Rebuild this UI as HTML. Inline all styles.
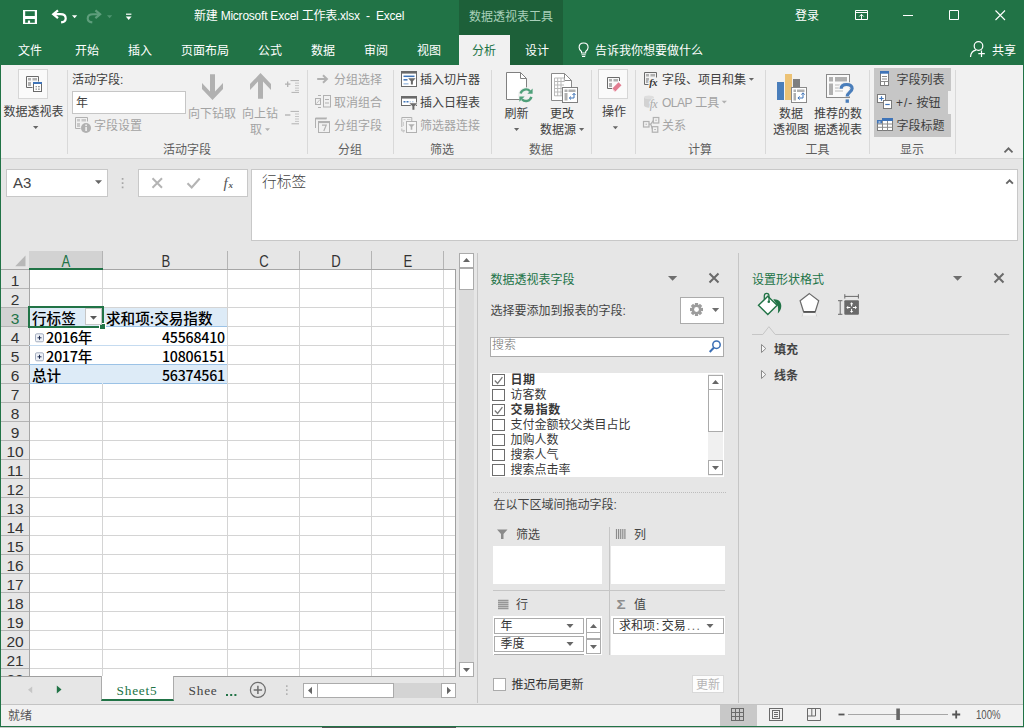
<!DOCTYPE html>
<html lang="zh-CN">
<head>
<meta charset="utf-8">
<title>新建 Microsoft Excel 工作表.xlsx - Excel</title>
<style>
*{box-sizing:border-box;margin:0;padding:0}
html,body{width:1024px;height:728px;overflow:hidden;background:#e6e6e6}
body{position:relative;font-family:"Liberation Sans","Noto Sans CJK SC",sans-serif;font-size:12px;color:#404040}
.a{position:absolute;white-space:nowrap}
.t{position:absolute;white-space:nowrap;line-height:16px;height:16px}
.w{color:#fff}
.g{color:#a3a3a3}
.c{text-align:center}
.sim{font-family:"Liberation Sans","Noto Sans CJK SC",sans-serif;font-weight:400}
svg{position:absolute;overflow:visible}
/* header */
#hdr{left:0;top:0;width:1024px;height:65px;background:#217346}
#ctx{left:459px;top:0;width:104px;height:65px;background:#1d6039}
#tabact{left:459px;top:35px;width:51px;height:30px;background:#f1f1f1}
#rib{left:0;top:65px;width:1024px;height:93px;background:#f1f1f1}
#ribline{left:0;top:158px;width:1024px;height:1px;background:#d5d5d5}
.sep{position:absolute;top:70px;width:1px;height:84px;background:#d9d9d9}
.gl2{color:#5e5e5e}
/* grid */
#grid{left:1px;top:251px;width:455px;height:425px;background:#fff;overflow:hidden}
.ch{position:absolute;top:0;height:18px;line-height:19px;text-align:center;font-size:16px;transform:scaleX(.82);color:#333;font-family:"Liberation Sans",sans-serif}
.rh{position:absolute;left:0;width:28px;height:19px;line-height:21px;text-align:center;font-size:15.500px;color:#333;font-family:"Liberation Sans",sans-serif}
.cell{position:absolute;height:18px;line-height:18px;font-size:14.6px;color:#000;font-family:"Noto Sans CJK SC","Liberation Sans",sans-serif}
.num{font-size:14.2px;letter-spacing:-0.2px}
/* panes */
.pane-t{color:#217346;font-size:12px}
.fld{position:absolute;left:510.500px;height:15px;line-height:15px;font-size:12px;color:#383838;white-space:nowrap}
.cb{position:absolute;left:492px;width:13px;height:12px;border:1px solid #6d6d6d;background:#fff}
</style>
</head>
<body>
<!-- HEADER -->
<div class="a" id="hdr"></div>
<div class="a" id="ctx"></div>
<div class="a" id="tabact"></div>
<div class="a" id="rib"></div>
<div class="a" id="ribline"></div>

<!--TITLEBAR-->
<svg style="left:0;top:0" width="1024" height="34" viewBox="0 0 1024 34" fill="none">
 <!-- save -->
 <path d="M23 10h14v14h-14z M25.200 11.300v4.700h9.600v-4.700z M25.200 19v3.700h2.700v-2.100h2.200v2.100h4.700v-3.700z" fill="#fff" fill-rule="evenodd"/>
 <!-- undo -->
 <path d="M58 10.300l-4.700 3.900 4.700 3.900" stroke="#fff" stroke-width="2.300"/>
 <path d="M54 14.200h6.400c3.200 0 5.300 1.700 5.300 4.200 0 2.100-1.600 3.600-4.600 4" stroke="#fff" stroke-width="2.200"/>
 <path d="M72 15.300h5.200l-2.600 3z" fill="#fff"/>
 <!-- redo -->
 <path d="M95.400 10.300l4.700 3.900-4.700 3.900" stroke="#5e9e7c" stroke-width="2.200"/>
 <path d="M99.400 14.200h-6.400c-3.200 0-5.300 1.700-5.300 4.200 0 2.100 1.600 3.600 4.600 4" stroke="#5e9e7c" stroke-width="2.100"/>
 <path d="M107 15.300h5.200l-2.600 3z" fill="#4f9470"/>
 <!-- customize -->
 <path d="M126 14.200h5.400" stroke="#fff" stroke-width="1.200"/>
 <path d="M125.800 16.600h5.800l-2.900 3.400z" fill="#fff"/>
 <!-- ribbon display -->
 <path d="M855.500 10.500h12v9h-12z" stroke="#fff" stroke-width="1"/>
 <path d="M855.500 12.500h12" stroke="#fff" stroke-width="1"/>
 <path d="M861.500 14.500v4.500M859.300 16.500l2.200-2.200 2.200 2.200" stroke="#fff" stroke-width="1"/>
 <!-- min -->
 <path d="M903 15.500h10" stroke="#fff" stroke-width="1"/>
 <!-- max -->
 <path d="M949.500 10.500h9v9h-9z" stroke="#fff" stroke-width="1"/>
 <!-- close -->
 <path d="M995.500 10.500l9.500 9.500M1005 10.500l-9.500 9.500" stroke="#fff" stroke-width="1.100"/>
</svg>
<div class="t w" id="ttl" style="left:194px;top:8px;font-size:12px;letter-spacing:-0.23px">新建 Microsoft Excel 工作表.xlsx&nbsp; -&nbsp; Excel</div>
<div class="t" style="left:469px;top:8.500px;color:#a9d0ba">数据透视表工具</div>
<div class="t w" style="left:795px;top:8px">登录</div>
<!--TABS-->
<div class="t w" style="left:18px;top:43px">文件</div>
<div class="t w" style="left:75px;top:43px">开始</div>
<div class="t w" style="left:128px;top:43px">插入</div>
<div class="t w" style="left:181px;top:43px">页面布局</div>
<div class="t w" style="left:258px;top:43px">公式</div>
<div class="t w" style="left:311px;top:43px">数据</div>
<div class="t w" style="left:364px;top:43px">审阅</div>
<div class="t w" style="left:417px;top:43px">视图</div>
<div class="t" style="left:472px;top:43px;color:#217346">分析</div>
<div class="t w" style="left:525px;top:43px">设计</div>
<div class="t w" style="left:595px;top:43px">告诉我你想要做什么</div>
<div class="t w" style="left:992px;top:43px">共享</div>
<svg style="left:0;top:34px" width="1024" height="31" viewBox="0 34 1024 31" fill="none">
 <!-- bulb -->
 <path d="M581.500 53v-1.500c-1.600-1.300-2.400-2.400-2.400-4.100 0-2.600 1.900-4.400 4.500-4.400s4.500 1.800 4.500 4.400c0 1.700-.8 2.800-2.400 4.100v1.500z" stroke="#fff" stroke-width="1.100"/>
 <path d="M581.500 54.800h4.200M582 56.500h3.200" stroke="#fff" stroke-width="1"/>
 <!-- person -->
 <circle cx="978.500" cy="46" r="4.300" stroke="#fff" stroke-width="1.200"/>
 <path d="M970.500 57c.3-3.800 2.600-6.300 5.400-6.800" stroke="#fff" stroke-width="1.200"/>
 <path d="M981.500 50.500v6.500M978.300 53.700h6.500" stroke="#fff" stroke-width="1.200"/>
</svg>
<!--RIBBON-->
<div class="sep" style="left:67px"></div>
<div class="sep" style="left:307px"></div>
<div class="sep" style="left:393px"></div>
<div class="sep" style="left:491px"></div>
<div class="sep" style="left:591px"></div>
<div class="sep" style="left:635px"></div>
<div class="sep" style="left:765px"></div>
<div class="sep" style="left:869px"></div>
<div class="sep" style="left:955px"></div>
<div class="a" style="left:18px;top:69px;width:30px;height:30px;background:#fafafa;border:1px solid #d6d6d6"></div>
<div class="t c " style="left:-16.5px;width:100px;top:104px;">数据透视表</div>
<div class="t " style="left:72px;top:72px;">活动字段:</div>
<div class="a" style="left:72px;top:91px;width:114px;height:23px;background:#fff;border:1px solid #c6c6c6"></div>
<div class="t " style="left:76px;top:94.5px;">年</div>
<div class="t g" style="left:94px;top:117.5px;">字段设置</div>
<div class="t c g" style="left:162.0px;width:100px;top:105.5px;">向下钻取</div>
<div class="t c g" style="left:210.0px;width:100px;top:105.5px;">向上钻</div>
<div class="t g" style="left:250px;top:121.5px;">取</div>
<div class="t c gl2" style="left:137.0px;width:100px;top:142px;">活动字段</div>
<div class="t g" style="left:334px;top:71.5px;">分组选择</div>
<div class="t g" style="left:334px;top:95px;">取消组合</div>
<div class="t g" style="left:334px;top:117.5px;">分组字段</div>
<div class="t c gl2" style="left:300.0px;width:100px;top:142px;">分组</div>
<div class="t " style="left:420px;top:71.5px;">插入切片器</div>
<div class="t " style="left:420px;top:95px;">插入日程表</div>
<div class="t g" style="left:420px;top:117.5px;">筛选器连接</div>
<div class="t c gl2" style="left:392.0px;width:100px;top:142px;">筛选</div>
<div class="t c " style="left:466.5px;width:100px;top:105.5px;">刷新</div>
<div class="t c " style="left:512.0px;width:100px;top:105.5px;">更改</div>
<div class="t " style="left:540px;top:121.5px;">数据源</div>
<div class="t c gl2" style="left:491.0px;width:100px;top:142px;">数据</div>
<div class="a" style="left:598px;top:69px;width:30px;height:30px;background:#fafafa;border:1px solid #d6d6d6"></div>
<div class="t c " style="left:564.0px;width:100px;top:104px;">操作</div>
<div class="t " style="left:662px;top:71.5px;">字段、项目和集</div>
<div class="t g" style="left:662px;top:94.5px;"><span style="letter-spacing:-0.5px">OLAP</span> 工具</div>
<div class="t g" style="left:662px;top:117.5px;">关系</div>
<div class="t c gl2" style="left:650.0px;width:100px;top:142px;">计算</div>
<div class="t c " style="left:741.0px;width:100px;top:105.5px;">数据</div>
<div class="t c " style="left:741.0px;width:100px;top:121.5px;">透视图</div>
<div class="t c " style="left:788.0px;width:100px;top:105.5px;">推荐的数</div>
<div class="t c " style="left:788.0px;width:100px;top:121.5px;">据透视表</div>
<div class="t c gl2" style="left:767.5px;width:100px;top:142px;">工具</div>
<div class="a" style="left:874px;top:68px;width:77px;height:69px;background:#c6c6c6"></div>
<div class="a" style="left:948px;top:91px;width:3px;height:23px;background:#f1f1f1"></div>
<div class="t " style="left:896.5px;top:72px;">字段列表</div>
<div class="t " style="left:896px;top:95px;"><span style="letter-spacing:0.9px">+/-</span> 按钮</div>
<div class="t " style="left:896.5px;top:117.5px;">字段标题</div>
<div class="t c gl2" style="left:862.0px;width:100px;top:142px;">显示</div>
<svg style="left:0;top:65px" width="1024" height="94" viewBox="0 65 1024 94" fill="none">
<g>
<path d="M26.500 76.500h12v5" stroke="#6a6a6a" stroke-width="1"/><path d="M26.500 76.500v11h6" stroke="#6a6a6a" stroke-width="1"/>
<rect x="28" y="78" width="3" height="2.500" fill="#b0b0b0"/><rect x="32.500" y="78" width="4.500" height="2.500" fill="#b0b0b0"/><rect x="28" y="82" width="3" height="4" fill="#b0b0b0"/>
<rect x="33.500" y="82.500" width="8" height="9" fill="#fff" stroke="#6a6a6a" stroke-width="1"/>
<rect x="33" y="82" width="9" height="2" fill="#3f74b8"/>
<rect x="35.500" y="86" width="1.500" height="1.300" fill="#999"/><rect x="38" y="86" width="1.800" height="1.300" fill="#999"/><rect x="35.500" y="88.500" width="1.500" height="1.300" fill="#999"/><rect x="38" y="88.500" width="1.800" height="1.300" fill="#999"/>
</g>
<path d="M33 126h5.4l-2.7 3z" fill="#666"/>
<g>
<path d="M75.500 128.500v-11h12v4" stroke="#b1b1b1" stroke-width="1"/><path d="M75.500 128.500h5" stroke="#b1b1b1" stroke-width="1"/>
<rect x="77" y="119" width="3" height="2.500" fill="#c9c9c9"/><rect x="81.500" y="119" width="4.500" height="2.500" fill="#c9c9c9"/><rect x="77" y="123" width="3" height="4" fill="#c9c9c9"/>
<circle cx="86" cy="128" r="5" fill="#b1b1b1"/><rect x="85.300" y="127" width="1.600" height="4" fill="#f1f1f1"/><rect x="85.300" y="124.500" width="1.600" height="1.600" fill="#f1f1f1"/>
</g>
<path d="M210 74.300h5v17.200l8-8.500v6l-10.500 11-10.500-11v-6l8 8.500z" fill="#b1b1b1"/>
<path d="M258 98.800h5v-17.200l8 8.500v-6l-10.500-11-10.500 11v6l8-8.500z" fill="#b1b1b1"/>
<path d="M265 128.3h5l-2.5 2.6z" fill="#b1b1b1"/>
<path d="M285 84.200h5.400M287.700 81.400v5.600" stroke="#b1b1b1" stroke-width="1.300"/><path d="M290.500 80.600h8.500M291.500 92.400h7.500" stroke="#b1b1b1" stroke-width="1"/><path d="M295 83.100h4M295 85.600h4M295 88.100h4M295 90.400h4" stroke="#c4c4c4" stroke-width="1"/>
<path d="M285 115h5.400" stroke="#b1b1b1" stroke-width="1.300"/><path d="M290.500 111.400h8.500M291.500 123.800h7.500" stroke="#b1b1b1" stroke-width="1"/><path d="M295 114h4M295 116.500h4M295 119h4M295 121.400h4" stroke="#c4c4c4" stroke-width="1"/>
<path d="M317.200 79h8.600M323 75.300l3.900 3.700-3.900 3.700" stroke="#b1b1b1" stroke-width="2"/>
<rect x="323.500" y="95.500" width="7" height="11.500" stroke="#b1b1b1" stroke-width="1"/><path d="M325 99.500h4M325 103h4" stroke="#b1b1b1" stroke-width="1"/><rect x="315.500" y="98.500" width="5" height="6" stroke="#b1b1b1" stroke-width="1"/><path d="M316.500 103.500l3.500-4" stroke="#b1b1b1" stroke-width=".8"/><path d="M318 95.500h3M318 107.500h3" stroke="#b1b1b1" stroke-width="1"/>
<path d="M315.500 128v-10h11.500" stroke="#b1b1b1" stroke-width="1"/><path d="M315.500 118.700h11" stroke="#b1b1b1" stroke-width="1.400"/><rect x="318.500" y="121.500" width="11" height="11" stroke="#b1b1b1" stroke-width="1"/><path d="M318.500 122.300h11" stroke="#b1b1b1" stroke-width="1.600"/><path d="M322 125.200h4.200l-2.400 5.800" stroke="#b1b1b1" stroke-width="1.200"/>
<rect x="401.500" y="71.500" width="15" height="15" fill="#fff" stroke="#6a6a6a" stroke-width="1"/><rect x="401" y="71" width="16" height="2.600" fill="#6a6a6a"/><path d="M403.500 76.300h11" stroke="#3f74b8" stroke-width="1.500"/><path d="M403.500 79.800h4" stroke="#3f74b8" stroke-width="1.500"/><path d="M403.500 83.800h5" stroke="#a9c4e4" stroke-width="1.500"/><path d="M408.200 78.300h7.400l-2.700 3v3.300h-2v-3.300z" fill="#6a6a6a"/>
<rect x="401.500" y="96.500" width="15" height="9" fill="#fff" stroke="#6a6a6a" stroke-width="1"/><rect x="401" y="96" width="16" height="2.600" fill="#6a6a6a"/><path d="M403.500 101.800h2M406.500 101.800h2" stroke="#3f74b8" stroke-width="1.400"/><path d="M409.500 101.800h1.500M412 101.800h1.500" stroke="#a9c4e4" stroke-width="1.200"/><path d="M408.800 102.500h9v1l-3.200 3.300v3.200h-2.600v-3.200l-3.200-3.300z" fill="#f1f1f1"/><path d="M409.600 103.200h7.600l-2.800 3v3.600h-2v-3.600z" fill="#6a6a6a"/>
<path d="M401.800 127v-9.500h10v3.500" stroke="#b1b1b1" stroke-width="1"/><path d="M403.500 119.500h2M407 119.500h3.500M403.500 122v4" stroke="#cfcfcf" stroke-width="1"/><rect x="406.500" y="121.500" width="10" height="11" fill="#f6f6f6" stroke="#b1b1b1" stroke-width="1"/><path d="M408.300 124.200h6.400l-2.400 2.500v3h-1.600v-3z" fill="#b1b1b1"/><path d="M401.800 128.500v2.500h2.500M403.300 129.800l1.200 1.200-1.200 1.200" stroke="#b1b1b1" stroke-width=".8"/>
<path d="M506.500 72.500h14l6 6v21h-20z" fill="#fff" stroke="#808080" stroke-width="1"/><path d="M520.500 72.500v6h6" stroke="#808080" stroke-width="1"/>
<circle cx="526" cy="95.200" r="8" fill="#f1f1f1"/><path d="M520.600 93.500a5.600 5.600 0 0 1 9.500-2.300" stroke="#4fa07a" stroke-width="2.400"/><path d="M531.400 96.900a5.600 5.600 0 0 1-9.500 2.300" stroke="#4fa07a" stroke-width="2.400"/><path d="M532.600 88.600v5.200h-5.200z" fill="#4fa07a"/><path d="M519.400 101.800v-5.200h5.200z" fill="#4fa07a"/>
<path d="M514 128h5.2l-2.6 2.9z" fill="#666"/>
<path d="M551.500 73.500h13l7 7v20h-20z" fill="#fff" stroke="#8a8a8a" stroke-width="1"/><path d="M564.500 73.500v7h7" stroke="#8a8a8a" stroke-width="1"/><path d="M554.500 78v18M557.700 78v18M561 78v18M554.500 78h9.500M554.500 81.500h9.500M554.500 85h9.500M554.500 88.500h9.500M554.500 92h9.500M554.500 95.800h9.500M564.200 78v4" stroke="#b9b9b9" stroke-width="1"/>
<rect x="562.500" y="87.500" width="15" height="15" fill="#fff" stroke="#808080" stroke-width="1"/><rect x="564.500" y="89.500" width="3" height="2.500" fill="#b0b0b0"/><rect x="568.500" y="89.500" width="7" height="2.500" fill="#b0b0b0"/><rect x="564.500" y="93" width="3" height="7.500" fill="#b0b0b0"/><path d="M569.500 98h4.500v-4.500M571 96.500l-1.700 1.500 1.700 1.500M572.500 95l1.500-1.700 1.500 1.700" stroke="#3f74b8" stroke-width="1"/>
<path d="M579 128h5.2l-2.6 2.9z" fill="#666"/>
<path d="M607.500 88.500v-11h12v3.500" stroke="#6a6a6a" stroke-width="1"/><path d="M607.500 88.500h4.500" stroke="#6a6a6a" stroke-width="1"/><rect x="609" y="79" width="3" height="2.500" fill="#b0b0b0"/><rect x="613.500" y="79" width="4.500" height="2.500" fill="#b0b0b0"/><rect x="609" y="83" width="3" height="4" fill="#b0b0b0"/><path d="M618.500 82.200l3 3-6.200 6.400-3-3z" fill="#e27d91"/><path d="M612.700 89.300l2.300 2.300" stroke="#f6c3cc" stroke-width="1"/>
<path d="M612.8 126.3h5.2l-2.6 2.9z" fill="#666"/>
<path d="M650 84.500h-5.500v-12h12v5" stroke="#6a6a6a" stroke-width="1"/><rect x="646" y="74" width="3" height="2.500" fill="#b0b0b0"/><rect x="650.500" y="74" width="4.500" height="2.500" fill="#b0b0b0"/><rect x="646" y="78" width="3" height="5" fill="#b0b0b0"/><text x="649.300" y="85.500" font-family="Liberation Serif,serif" font-style="italic" font-size="10.500" font-weight="bold" fill="#333" stroke="#f1f1f1" stroke-width="2.500" paint-order="stroke" letter-spacing="-0.5">fx</text>
<path d="M748.8 78h5.2l-2.6 2.8z" fill="#666"/>
<path d="M644 97.500v8c0 1.200 2.200 2.200 4.900 2.200s4.900-1 4.900-2.200v-8" fill="#d2d2d2"/><ellipse cx="648.900" cy="97.300" rx="4.900" ry="1.900" fill="#dedede"/><text x="649.800" y="108.300" font-family="Liberation Serif,serif" font-style="italic" font-size="11.500" fill="#a9a9a9" stroke="#f1f1f1" stroke-width="2" paint-order="stroke" letter-spacing="-0.5">fx</text>
<path d="M721.7 100.8h5.2l-2.6 2.8z" fill="#b1b1b1"/>
<rect x="643.500" y="121.500" width="5.500" height="5.500" stroke="#b1b1b1" stroke-width="1.200"/><rect x="653.300" y="117.500" width="5.500" height="5.500" stroke="#b1b1b1" stroke-width="1.200"/><rect x="652.300" y="126.700" width="5.500" height="5.500" stroke="#b1b1b1" stroke-width="1.200"/><path d="M649 124.200h1.800l2.500-3.500M650.800 124.200l1.700 5" stroke="#b1b1b1" stroke-width="1.200"/><path d="M645.500 124.200h1.500M655.300 120.200h1.500M654.300 129.500h1.500" stroke="#b1b1b1" stroke-width="1"/>
<rect x="777" y="82" width="7" height="18" fill="#4a7ebb"/><rect x="785" y="74" width="7" height="26" fill="#ecc275"/><rect x="793" y="79" width="7" height="9" fill="#7f7f7f"/><rect x="791.500" y="87.500" width="15" height="15" fill="#fff" stroke="#8a8a8a" stroke-width="1"/><rect x="793.500" y="89.500" width="2.500" height="2.500" fill="#b0b0b0"/><rect x="797" y="89.500" width="7.500" height="2.500" fill="#b0b0b0"/><rect x="793.500" y="93" width="2.500" height="7.500" fill="#b0b0b0"/><path d="M798 98h5v-5M799.700 96.400l-1.800 1.600 1.800 1.600M801.400 94.600l1.600-1.800 1.600 1.800" stroke="#3f74b8" stroke-width="1"/>
<rect x="826.500" y="74.500" width="23" height="23" fill="#fafafa" stroke="#8a8a8a" stroke-width="1"/><rect x="829" y="77" width="4" height="4.500" fill="#b0b0b0"/><rect x="835" y="77" width="12" height="4.500" fill="#b0b0b0"/><rect x="829" y="83.500" width="4" height="11.500" fill="#b0b0b0"/><path d="M835 85h7M835 88h5M835 91h8" stroke="#d0d0d0" stroke-width="1.400"/><path d="M841.200 88.800c0-3 2.200-4.300 5.400-4.300s5.500 1.400 5.500 4.100c0 3.500-4.900 3.700-4.900 8" stroke="#f1f1f1" stroke-width="5.400"/><rect x="844.700" y="98.600" width="5" height="5" fill="#f1f1f1"/><path d="M841.200 88.800c0-3 2.200-4.300 5.400-4.300s5.500 1.400 5.500 4.100c0 3.500-4.900 3.700-4.900 8" stroke="#4a7ebb" stroke-width="3.200"/><rect x="845.600" y="99.400" width="3.300" height="3.400" fill="#4a7ebb"/>
<rect x="880.500" y="71.500" width="8" height="14" fill="#fff" stroke="#7a7a7a" stroke-width="1"/><rect x="880" y="71" width="9" height="2.700" fill="#3f74b8"/><path d="M882 76.500h5M882 79h5M880.500 81.500h8M884.500 81.500v4" stroke="#8c8c8c" stroke-width="1"/>
<rect x="877.500" y="94.500" width="8" height="8" fill="#fff" stroke="#7a7a7a" stroke-width="1"/><path d="M879.300 98.500h4.400M881.500 96.300v4.400" stroke="#3f74b8" stroke-width="1.200"/><rect x="883.500" y="100.500" width="8" height="8" fill="#fff" stroke="#7a7a7a" stroke-width="1"/><path d="M885.300 104.500h4.400" stroke="#3f74b8" stroke-width="1.200"/>
<rect x="877.500" y="120.500" width="15" height="10" fill="#fff" stroke="#7a7a7a" stroke-width="1"/><rect x="882" y="118" width="11" height="3" fill="#3f74b8"/><rect x="877" y="120" width="5.500" height="3.500" fill="#3f74b8"/><path d="M877.500 124h15M877.500 127.300h15M882.500 121v9.500M887.500 121v9.500" stroke="#8c8c8c" stroke-width="1"/><path d="M878.500 122h2" stroke="#fff" stroke-width="1"/>
<path d="M1004.500 152.300l4-4 4 4" stroke="#666" stroke-width="1.800"/>
</svg>
<!--FORMULA-->
<div class="a" style="left:6px;top:169px;width:102px;height:28px;background:#fff;border:1px solid #c8c8c8"></div>
<div class="t" style="left:13px;top:175px;font-size:15px;color:#444;font-family:'Liberation Sans',sans-serif">A3</div>
<div class="a" style="left:138px;top:169px;width:110px;height:28px;background:#fff;border:1px solid #c8c8c8"></div>
<div class="a" style="left:251px;top:169px;width:767px;height:72px;background:#fff;border:1px solid #c8c8c8"></div>
<div class="t" style="left:262px;top:174px;font-size:14.7px;color:#444;font-weight:300">行标签</div>
<svg style="left:0;top:160px" width="1024" height="90" viewBox="0 160 1024 90" fill="none">
<path d="M95 180.300h7l-3.500 3.700z" fill="#666"/>
<path d="M122.600 178v1.800M122.600 182.200v1.800M122.600 186.400v1.800" stroke="#a6a6a6" stroke-width="1.700"/>
<path d="M152.500 178.300l9.500 9.500M162 178.300l-9.500 9.500" stroke="#b4b4b4" stroke-width="2"/>
<path d="M187.500 183.300l4.200 4.200 8-9" stroke="#b4b4b4" stroke-width="2.100"/>
<text x="223.500" y="187.500" font-family="Liberation Serif,serif" font-style="italic" font-size="15" fill="#555">f</text>
<text x="228.500" y="187.500" font-family="Liberation Serif,serif" font-style="italic" font-weight="bold" font-size="9" fill="#555">x</text>
<path d="M1006.300 183.600l3.300-3.300 3.300 3.300" stroke="#666" stroke-width="1.900"/>
</svg>
<!--GRID-->
<div class="a" style="left:30px;top:270px;width:426px;height:406px;background:#fff"></div>
<div class="a" style="left:30px;top:308px;width:197px;height:19px;background:#ddebf7"></div>
<div class="a" style="left:30px;top:365px;width:197px;height:19px;background:#ddebf7"></div>
<div class="a" style="left:29px;top:251px;width:74px;height:17px;background:#d2d2d2"></div>
<div class="a" style="left:1px;top:308px;width:29px;height:19px;background:#d2d2d2"></div>
<svg style="left:0;top:245px" width="480" height="435" viewBox="0 245 480 435" fill="none" shape-rendering="crispEdges">
<path d="M102.5 270v406" stroke="#d4d4d4"/>
<path d="M227.5 270v406" stroke="#d4d4d4"/>
<path d="M299.5 270v406" stroke="#d4d4d4"/>
<path d="M371.5 270v406" stroke="#d4d4d4"/>
<path d="M443.5 270v406" stroke="#d4d4d4"/>
<path d="M29 288.5h427" stroke="#d4d4d4"/>
<path d="M1 288.5h28" stroke="#b4b4b4"/>
<path d="M29 307.5h427" stroke="#d4d4d4"/>
<path d="M1 307.5h28" stroke="#b4b4b4"/>
<path d="M29 326.5h427" stroke="#d4d4d4"/>
<path d="M1 326.5h28" stroke="#b4b4b4"/>
<path d="M29 345.5h427" stroke="#d4d4d4"/>
<path d="M1 345.5h28" stroke="#b4b4b4"/>
<path d="M29 364.5h427" stroke="#d4d4d4"/>
<path d="M1 364.5h28" stroke="#b4b4b4"/>
<path d="M29 383.5h427" stroke="#d4d4d4"/>
<path d="M1 383.5h28" stroke="#b4b4b4"/>
<path d="M29 402.5h427" stroke="#d4d4d4"/>
<path d="M1 402.5h28" stroke="#b4b4b4"/>
<path d="M29 421.5h427" stroke="#d4d4d4"/>
<path d="M1 421.5h28" stroke="#b4b4b4"/>
<path d="M29 440.5h427" stroke="#d4d4d4"/>
<path d="M1 440.5h28" stroke="#b4b4b4"/>
<path d="M29 459.5h427" stroke="#d4d4d4"/>
<path d="M1 459.5h28" stroke="#b4b4b4"/>
<path d="M29 478.5h427" stroke="#d4d4d4"/>
<path d="M1 478.5h28" stroke="#b4b4b4"/>
<path d="M29 497.5h427" stroke="#d4d4d4"/>
<path d="M1 497.5h28" stroke="#b4b4b4"/>
<path d="M29 516.5h427" stroke="#d4d4d4"/>
<path d="M1 516.5h28" stroke="#b4b4b4"/>
<path d="M29 535.5h427" stroke="#d4d4d4"/>
<path d="M1 535.5h28" stroke="#b4b4b4"/>
<path d="M29 554.5h427" stroke="#d4d4d4"/>
<path d="M1 554.5h28" stroke="#b4b4b4"/>
<path d="M29 573.5h427" stroke="#d4d4d4"/>
<path d="M1 573.5h28" stroke="#b4b4b4"/>
<path d="M29 592.5h427" stroke="#d4d4d4"/>
<path d="M1 592.5h28" stroke="#b4b4b4"/>
<path d="M29 611.5h427" stroke="#d4d4d4"/>
<path d="M1 611.5h28" stroke="#b4b4b4"/>
<path d="M29 630.5h427" stroke="#d4d4d4"/>
<path d="M1 630.5h28" stroke="#b4b4b4"/>
<path d="M29 649.5h427" stroke="#d4d4d4"/>
<path d="M1 649.5h28" stroke="#b4b4b4"/>
<path d="M29 668.5h427" stroke="#d4d4d4"/>
<path d="M1 668.5h28" stroke="#b4b4b4"/>
<path d="M102.5 251v18" stroke="#b4b4b4"/>
<path d="M227.5 251v18" stroke="#b4b4b4"/>
<path d="M299.5 251v18" stroke="#b4b4b4"/>
<path d="M371.5 251v18" stroke="#b4b4b4"/>
<path d="M443.5 251v18" stroke="#b4b4b4"/>
<path d="M29.500 270v406" stroke="#a6a6a6"/>
<path d="M1 269.500h455" stroke="#a6a6a6"/>
<path d="M455.500 269v407" stroke="#a0a0a0"/>
<path d="M1 676.500h455" stroke="#a0a0a0"/>
<rect x="29" y="268" width="74" height="2" fill="#217346"/>
<path d="M102.500 327v37" stroke="#fff"/>
<path d="M29 326.500h198" stroke="#9bc2e6"/>
<path d="M29 345.500h198" stroke="#c5dbf0"/>
<path d="M29 364.500h198" stroke="#9bc2e6"/>
<path d="M29 383.500h198" stroke="#9bc2e6"/>
<path d="M102.500 308v19M102.500 365v19" stroke="#ddebf7"/>
</svg>
<svg style="left:0;top:245px" width="480" height="435" viewBox="0 245 480 435" fill="none">
<path d="M25.500 255.500v10.800h-10.300z" fill="#b8b8b8"/>
<rect x="29" y="307" width="74" height="20" stroke="#217346" stroke-width="2"/>
<rect x="99.500" y="323.500" width="6" height="6" fill="#217346" stroke="#fff" stroke-width="1"/>
<rect x="85.500" y="308.500" width="16" height="16" fill="#fcfcfc" stroke="#c6c6c6"/>
<path d="M90 316h7l-3.500 3.800z" fill="#555"/>
<g stroke="#a3adbf" fill="#eef1f7"><rect x="35.500" y="333.800" width="8" height="8" rx="1.300"/><rect x="35.500" y="352.800" width="8" height="8" rx="1.300"/></g>
<path d="M37.500 337.800h4M39.500 335.800v4M37.500 356.800h4M39.500 354.800v4" stroke="#1f2d50" stroke-width="1"/>
</svg>
<div class="ch" style="left:56px;width:20px;top:252px;color:#217346">A</div>
<div class="ch" style="left:155.5px;width:20px;top:252px;color:#333">B</div>
<div class="ch" style="left:253.5px;width:20px;top:252px;color:#333">C</div>
<div class="ch" style="left:325.5px;width:20px;top:252px;color:#333">D</div>
<div class="ch" style="left:397.5px;width:20px;top:252px;color:#333">E</div>
<div class="rh" style="left:1px;top:270px;color:#333">1</div>
<div class="rh" style="left:1px;top:289px;color:#333">2</div>
<div class="rh" style="left:1px;top:308px;color:#217346">3</div>
<div class="rh" style="left:1px;top:327px;color:#333">4</div>
<div class="rh" style="left:1px;top:346px;color:#333">5</div>
<div class="rh" style="left:1px;top:365px;color:#333">6</div>
<div class="rh" style="left:1px;top:384px;color:#333">7</div>
<div class="rh" style="left:1px;top:403px;color:#333">8</div>
<div class="rh" style="left:1px;top:422px;color:#333">9</div>
<div class="rh" style="left:1px;top:441px;color:#333">10</div>
<div class="rh" style="left:1px;top:460px;color:#333">11</div>
<div class="rh" style="left:1px;top:479px;color:#333">12</div>
<div class="rh" style="left:1px;top:498px;color:#333">13</div>
<div class="rh" style="left:1px;top:517px;color:#333">14</div>
<div class="rh" style="left:1px;top:536px;color:#333">15</div>
<div class="rh" style="left:1px;top:555px;color:#333">16</div>
<div class="rh" style="left:1px;top:574px;color:#333">17</div>
<div class="rh" style="left:1px;top:593px;color:#333">18</div>
<div class="rh" style="left:1px;top:612px;color:#333">19</div>
<div class="rh" style="left:1px;top:631px;color:#333">20</div>
<div class="rh" style="left:1px;top:650px;color:#333">21</div>
<div class="a" style="left:1px;top:669px;width:28px;height:7px;overflow:hidden"><div class="rh" style="left:0;top:0px;">22</div></div>
<div class="cell" style="left:32px;top:309px;font-weight:500">行标签</div>
<div class="cell" style="left:106px;top:309px;font-weight:500">求和项:交易指数</div>
<div class="cell" style="left:46px;top:328px;font-weight:500;letter-spacing:-0.4px">2016年</div>
<div class="cell" style="left:46px;top:347px;font-weight:500;letter-spacing:-0.4px">2017年</div>
<div class="cell" style="left:32px;top:366px;font-weight:500">总计</div>
<div class="cell num" style="left:125px;width:100px;text-align:right;top:328px;font-weight:500">45568410</div>
<div class="cell num" style="left:125px;width:100px;text-align:right;top:347px;font-weight:500">10806151</div>
<div class="cell num" style="left:125px;width:100px;text-align:right;top:366px;font-weight:500">56374561</div>
<div class="a" style="left:459px;top:253px;width:15px;height:424px;background:#dcdcdc"></div>
<div class="a" style="left:459px;top:253px;width:15px;height:15px;background:#fff;border:1px solid #ababab"></div>
<div class="a" style="left:459px;top:268px;width:15px;height:22px;background:#fff;border:1px solid #ababab"></div>
<div class="a" style="left:459px;top:662px;width:15px;height:15px;background:#fff;border:1px solid #ababab"></div>
<svg style="left:459px;top:253px" width="15" height="424" viewBox="0 0 15 424"><path d="M4 9h7l-3.500-4z" fill="#666"/><path d="M4 415h7l-3.500 4z" fill="#666"/></svg>
<!--SHEETTABS-->
<div class="a" style="left:101px;top:676px;width:73px;height:25px;background:#fff;border-left:1px solid #ababab;border-right:1px solid #ababab;border-bottom:2px solid #217346"></div>
<div class="t" style="left:116.500px;top:682.500px;font-family:'Liberation Serif',serif;font-size:13.300px;letter-spacing:0.8px;color:#217346;">Sheet5</div>
<div class="a" style="left:188.500px;top:682px;width:28.500px;height:16px;overflow:hidden"><div class="t" style="left:0;top:0.500px;font-family:'Liberation Serif',serif;font-size:13.300px;letter-spacing:0.8px;color:#444;">Sheet6</div></div>
<svg style="left:0;top:676px" width="480" height="28" viewBox="0 676 480 28" fill="none">
<path d="M32.200 686.400v6.800l-4.200-3.400z" fill="#c6c6c6"/>
<path d="M56.800 685.400v8.200l4.700-4.100z" fill="#217346"/>
<path d="M226 694h2v2h-2zM230.200 694h2v2h-2zM234.400 694h2v2h-2z" fill="#217346"/>
<circle cx="257.900" cy="689.900" r="7.500" stroke="#6e6e6e" stroke-width="1.200"/>
<path d="M253.700 689.900h8.400M257.900 685.700v8.400" stroke="#6e6e6e" stroke-width="1.500"/>
<path d="M286.800 685.300v1.600M286.800 689.300v1.600M286.800 693.300v1.600" stroke="#b0b0b0" stroke-width="1.500"/>
</svg>
<div class="a" style="left:318px;top:683px;width:123px;height:15px;background:#d4d4d4"></div>
<div class="a" style="left:303px;top:683px;width:15px;height:15px;background:#fff;border:1px solid #ababab"></div>
<div class="a" style="left:318px;top:683px;width:76px;height:15px;background:#fff;border:1px solid #ababab;border-left:none"></div>
<div class="a" style="left:441px;top:683px;width:15px;height:15px;background:#fff;border:1px solid #ababab"></div>
<svg style="left:303px;top:683px" width="153" height="15" viewBox="0 0 153 15"><path d="M9 3.800v7.400l-4-3.700z" fill="#666"/><path d="M144 3.800v7.400l4-3.700z" fill="#666"/></svg>
<!--PANE1-->
<div class="a" style="left:477px;top:253px;width:1px;height:450px;background:#c6c6c6"></div>
<div class="a" style="left:738px;top:253px;width:1px;height:450px;background:#c6c6c6"></div>
<div class="t pane-t" style="left:490.500px;top:272px">数据透视表字段</div>
<div class="t" style="left:490.500px;top:303px;color:#444">选择要添加到报表的字段:</div>
<div class="a" style="left:680px;top:297px;width:44px;height:27px;background:#fff;border:1px solid #ababab"></div>
<div class="a" style="left:490px;top:337px;width:234px;height:20px;background:#fff;border:1px solid #ababab"></div>
<div class="t sim" style="left:492px;top:336.500px;color:#707070;font-weight:300">搜索</div>
<div class="a" style="left:490px;top:373px;width:234px;height:104px;background:#fff"></div>
<div class="cb" style="top:374px"></div>
<div class="fld" style="top:372.5px;font-weight:bold;letter-spacing:0.6px;">日期</div>
<div class="cb" style="top:389px"></div>
<div class="fld" style="top:387.5px;font-weight:400;">访客数</div>
<div class="cb" style="top:404px"></div>
<div class="fld" style="top:402.5px;font-weight:bold;letter-spacing:0.6px;">交易指数</div>
<div class="cb" style="top:419px"></div>
<div class="fld" style="top:417.5px;font-weight:400;">支付金额较父类目占比</div>
<div class="cb" style="top:434px"></div>
<div class="fld" style="top:432.5px;font-weight:400;">加购人数</div>
<div class="cb" style="top:449px"></div>
<div class="fld" style="top:447.5px;font-weight:400;">搜索人气</div>
<div class="cb" style="top:464px"></div>
<div class="fld" style="top:462.5px;font-weight:400;">搜索点击率</div>
<div class="a" style="left:708px;top:374px;width:15px;height:102px;background:#f0f0f0"></div>
<div class="a" style="left:708px;top:375px;width:15px;height:15px;background:#fff;border:1px solid #ababab"></div>
<div class="a" style="left:708px;top:389px;width:15px;height:43px;background:#fff;border:1px solid #ababab"></div>
<div class="a" style="left:708px;top:460px;width:15px;height:15px;background:#fff;border:1px solid #ababab"></div>
<div class="a" style="left:493px;top:492px;width:233px;height:0;border-top:1px dotted #bdbdbd"></div>
<div class="t" style="left:493.500px;top:496.500px;color:#444">在以下区域间拖动字段:</div>
<div class="t" style="left:516px;top:527px;color:#444">筛选</div>
<div class="t" style="left:634px;top:527px;color:#444">列</div>
<div class="t" style="left:516px;top:596.500px;color:#444">行</div>
<div class="t" style="left:634px;top:596.500px;color:#444">值</div>
<div class="a" style="left:493px;top:546px;width:109px;height:38px;background:#fff"></div>
<div class="a" style="left:611px;top:546px;width:114px;height:38px;background:#fff"></div>
<div class="a" style="left:493px;top:616px;width:109px;height:39px;background:#fff"></div>
<div class="a" style="left:611px;top:616px;width:114px;height:39px;background:#fff"></div>
<div class="a" style="left:608.500px;top:527px;width:1px;height:128px;background:#c6c6c6"></div>
<div class="a" style="left:493px;top:590px;width:232px;height:1px;background:#c6c6c6"></div>
<div class="a" style="left:494px;top:618px;width:90px;height:16px;background:#fff;border:1px solid #ababab"></div>
<div class="a" style="left:494px;top:636px;width:90px;height:16px;background:#fff;border:1px solid #ababab"></div>
<div class="a" style="left:494px;top:654px;width:90px;height:1px;background:#ababab"></div>
<div class="a" style="left:612.500px;top:618px;width:111px;height:16px;background:#fff;border:1px solid #ababab"></div>
<div class="t sim" style="left:500.500px;top:618px;color:#333">年</div>
<div class="t sim" style="left:500.500px;top:636px;color:#333">季度</div>
<div class="t sim" style="left:619px;top:618px;color:#333">求和项<span style="letter-spacing:2.500px;margin-left:1px">:</span>交易<span style="letter-spacing:1.500px;margin-left:1px;color:#666">...</span></div>
<div class="a" style="left:586px;top:618px;width:15px;height:15px;background:#fff;border:1px solid #ababab"></div>
<div class="a" style="left:586px;top:632px;width:15px;height:7px;background:#fff;border:1px solid #ababab"></div>
<div class="a" style="left:586px;top:639px;width:15px;height:15px;background:#fff;border:1px solid #ababab"></div>
<div class="a" style="left:493px;top:677.500px;width:13px;height:13px;background:#fff;border:1px solid #ababab"></div>
<div class="t" style="left:511.500px;top:677px;color:#333">推迟布局更新</div>
<div class="a" style="left:691.500px;top:675px;width:32.500px;height:18px;background:#fdfdfd;border:1px solid #d9d9d9"></div>
<div class="t" style="left:696px;top:677px;color:#b5b5b5">更新</div>
<svg style="left:478px;top:253px" width="260" height="450" viewBox="478 253 260 450" fill="none">
<path d="M668 276h9.200l-4.600 4.800z" fill="#6e6e6e"/>
<path d="M709.500 273.500l9 9M718.500 273.500l-9 9" stroke="#6a6a6a" stroke-width="2"/>
<g transform="translate(696.500 309.500)" fill="#9c9c9c"><circle r="4.900"/><rect x="-1.600" y="-6.500" width="3.200" height="13"/><rect x="-1.600" y="-6.500" width="3.200" height="13" transform="rotate(45)"/><rect x="-1.600" y="-6.500" width="3.200" height="13" transform="rotate(90)"/><rect x="-1.600" y="-6.500" width="3.200" height="13" transform="rotate(135)"/><circle r="2.400" fill="#fff"/></g>
<path d="M712 308h7.200l-3.600 4z" fill="#6e6e6e"/>
<circle cx="716.500" cy="344.700" r="3.700" stroke="#3b6fb5" stroke-width="1.500"/><path d="M714 347.500l-4.300 4.500" stroke="#3b6fb5" stroke-width="2"/>
<g stroke="#7a7a7a" stroke-width="1.300"><path d="M494.800 380.500l2.800 3 4.800-6.300"/><path d="M494.800 410.500l2.800 3 4.800-6.300"/></g>
<path d="M712 384h7l-3.500-4z" fill="#666"/><path d="M712 466h7l-3.500 4z" fill="#666"/>
<path d="M497 529.500h10.500l-4 4.500v5h-2.500v-5z" fill="#8a8a8a"/>
<path d="M616.500 529v10M618.600 529v10M620.700 529v10M622.800 529v10M624.900 529v10" stroke="#8c8c8c" stroke-width="1.200"/>
<path d="M498 600.500h10.500M498 602.500h10.500M498 604.500h10.500M498 606.500h10.500M498 608.500h10.500" stroke="#979797" stroke-width="1.300"/>
<text transform="translate(616.500 609.200) scale(1.22 1)" font-family="Liberation Sans,sans-serif" font-weight="bold" font-size="12.500" fill="#8e8e8e">Σ</text>
<path d="M566.500 624h7l-3.500 4zM566.500 642h7l-3.500 4zM706.500 624h7l-3.500 4z" fill="#666"/>
<path d="M590 628h7l-3.500-4zM590 645h7l-3.500 4z" fill="#666"/>
</svg>
<!--PANE2-->
<div class="t pane-t" style="left:752px;top:272px">设置形状格式</div>
<div class="t" style="left:774px;top:341.500px;color:#444;font-weight:bold">填充</div>
<div class="t" style="left:774px;top:367.500px;color:#444;font-weight:bold">线条</div>
<svg style="left:739px;top:253px" width="285" height="450" viewBox="739 253 285 450" fill="none">
<path d="M953 276h9.200l-4.600 4.800z" fill="#6e6e6e"/>
<path d="M994.500 273.500l9 9M1003.500 273.500l-9 9" stroke="#6a6a6a" stroke-width="2"/>
<!-- bucket -->
<path d="M767.800 296.300l9.300 9-9.300 9.300-9.300-9.300z" fill="#fff" stroke="#217346" stroke-width="1.400"/>
<path d="M764.300 300v-4c0-1.700 1-2.700 2.400-2.700s2.300 1 2.300 2.700v5.500" stroke="#217346" stroke-width="1.300"/>
<circle cx="768.800" cy="301.700" r="1.300" fill="#217346"/>
<path d="M773.300 299.400c4.500-.6 8 2.300 8 6.600 0 3-1.600 5.600-3.500 7.600.6-3.600.4-6.600-.4-8.300z" fill="#217346"/>
<!-- pentagon -->
<path d="M809.400 293.600l9.300 7.200-3.500 11h-11.600l-3.500-11z" fill="#fff" stroke="#6a6a6a" stroke-width="1.200"/>
<path d="M803.600 311.900h11.600" stroke="#555" stroke-width="1.800"/>
<path d="M803.400 313l-1.300 3.300M815.400 313l1.300 3.300" stroke="#c9c9c9" stroke-width="1"/>
<path d="M803.500 313h11.800l1 2.500h-13.800z" fill="#f4f4f4"/>
<!-- size -->
<rect x="844.300" y="300.200" width="14.600" height="14.600" rx="1" fill="#6a6a6a"/>
<path d="M847 307.500h9.200M851.600 303v9.200" stroke="#fff" stroke-width="1" stroke-dasharray="3.300 2.600"/>
<path d="M851.600 302.300l-1.700 1.900h3.400zM851.600 312.800l-1.700-1.900h3.400zM846.300 307.500l1.900-1.700v3.400zM856.900 307.500l-1.900-1.700v3.400z" fill="#fff"/>
<path d="M844.800 296.400h13.600M844.800 294.200v4.400M858.400 294.200v4.400M840.200 300.700v13.600M838 300.700h4.400M838 314.300h4.400" stroke="#6a6a6a" stroke-width="1"/>
<!-- line w/ notch -->
<path d="M752 334.500h10.800l6.100-7.800 6.300 7.800h234" stroke="#c6c6c6" stroke-width="1"/>
<!-- expanders -->
<path d="M761.500 344.500v8l4.300-4zM761.500 370.500v8l4.300-4z" stroke="#8a8a8a" stroke-width="1" fill="#f6f6f6"/>
</svg>
<!--STATUS-->
<div class="a" style="left:0;top:704px;width:1024px;height:1px;background:#c4c4c4"></div>
<div class="a" style="left:0;top:705px;width:1024px;height:21px;background:#f1f1f1"></div>
<div class="t" style="left:8px;top:707.500px;color:#555">就绪</div>
<div class="a" style="left:719.500px;top:705px;width:37.500px;height:21px;background:#c8c8c8"></div>
<svg style="left:700px;top:704px" width="324" height="22" viewBox="700 704 324 22" fill="none">
<g stroke="#6a6a6a" stroke-width="1">
<rect x="731.500" y="708.500" width="12" height="12"/><path d="M735.500 708.500v12M739.500 708.500v12M731.500 712.500h12M731.500 716.500h12"/>
<rect x="769.500" y="708.500" width="13" height="12"/><rect x="772.500" y="710.500" width="7" height="8"/><path d="M774 712.500h4M774 714.500h4M774 716.500h4"/>
<path d="M807.500 720.500v-12h13v12zM811.800 708.500v7.500M815.500 708.500v7.500M807.500 716h8" />
</g>
<path d="M838.500 714.500h6" stroke="#555" stroke-width="1.800"/>
<path d="M848 714.500h100" stroke="#a6a6a6" stroke-width="1"/>
<rect x="896.300" y="708.500" width="3.600" height="11.500" fill="#666"/>
<path d="M952.200 714.500h8M956.200 710.500v8" stroke="#555" stroke-width="1.800"/>
</svg>
<div class="t" style="left:976px;top:707px;color:#555;font-size:12px;transform:scaleX(.8);transform-origin:0 0">100%</div>

<!-- window border -->
<div class="a" style="left:0;top:0;width:1px;height:727px;background:#217346"></div>
<div class="a" style="left:1023px;top:0;width:1px;height:727px;background:#217346"></div>
<div class="a" style="left:0;top:726px;width:1024px;height:1px;background:#217346"></div>
<div class="a" style="left:0;top:727px;width:1024px;height:1px;background:#c9c9c9"></div>
<div class="a" style="left:322px;top:727px;width:134px;height:1px;background:#555"></div>
</body>
</html>
